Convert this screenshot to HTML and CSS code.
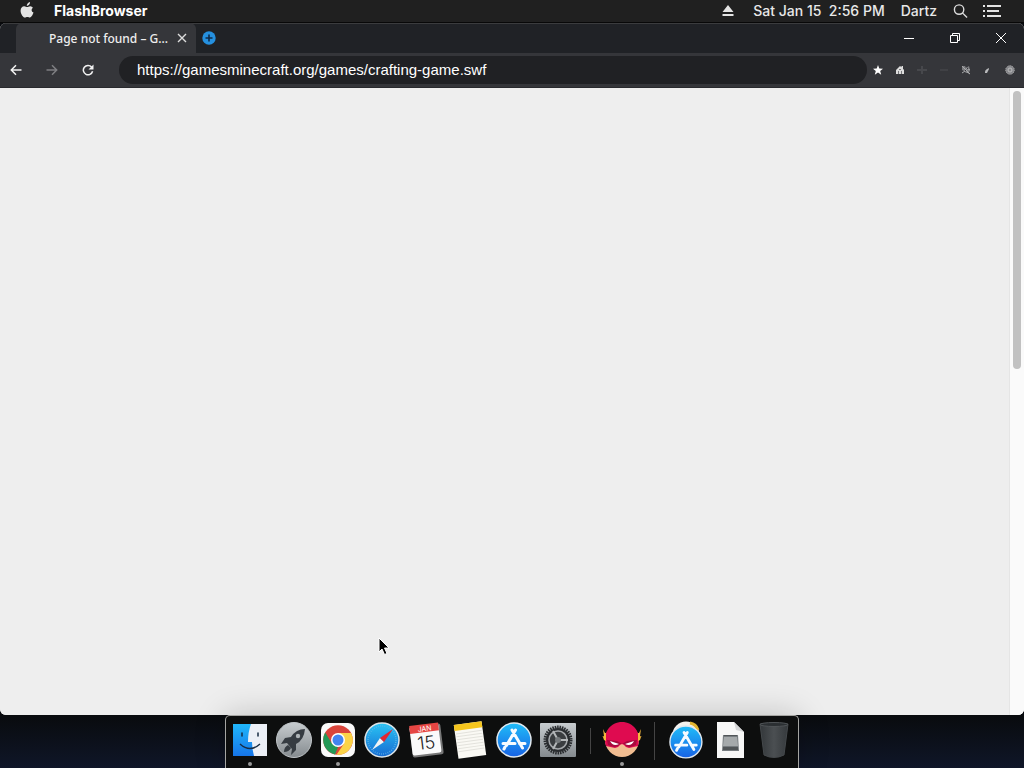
FILE: index.html
```html
<!DOCTYPE html>
<html lang="en">
<head>
<meta charset="utf-8">
<title>FlashBrowser</title>
<link rel="stylesheet" href="styles.css">
</head>
<body>
<header class="menubar">
  <button class="plain apple" aria-label="Apple menu"><svg width="14" height="17" viewBox="0 0 14 17"><path fill="#e4e4e4" d="M10 0C10.200 2 8.600 3.900 6.800 4 6.600 2.200 8.200.400 10 0ZM12.800 5.700C11 6.900 11.200 9.600 13.500 10.600 12.900 12.500 11.400 15.500 9.900 15.500 8.900 15.500 8.600 14.900 7.400 14.900S5.800 15.500 4.900 15.500C3.200 15.500.600 12 .600 8.700.600 5.900 2.300 4.300 4.200 4.300 5.500 4.300 6.400 5.100 7.200 5.100S9 4.200 10.400 4.300C11.400 4.400 12.200 4.800 12.800 5.700Z"/></svg></button>
  <button class="plain app-name">FlashBrowser</button>
  <div class="status">
    <button class="plain eject" aria-label="Eject"><svg width="12" height="12" viewBox="0 0 12 12"><path fill="#e4e4e4" d="M6 0 11.500 7H.500ZM.500 9h11v2H.500Z"/></svg></button>
    <time class="clock">Sat Jan 15&nbsp; 2:56 PM</time>
    <button class="plain user">Dartz</button>
    <button class="plain search" aria-label="Search"><svg width="15" height="16" viewBox="0 0 16 16" fill="none" stroke="#ddd" stroke-width="1.500"><circle cx="6.500" cy="6.500" r="5"/><path d="m10 10 5 5"/></svg></button>
    <button class="plain" aria-label="Notification center"><svg width="18" height="12" viewBox="0 0 18 12" fill="none" stroke="#e4e4e4" stroke-width="2"><path d="M0 1h2M4 1h14M0 6h2M4 6h12M0 11h2M4 11h14"/></svg></button>
  </div>
</header>

<main class="window">
  <div class="tabs">
    <div class="tab"><span class="tab-title">Page not found – G...</span><button class="plain" aria-label="Close tab"><svg width="10" height="10" viewBox="0 0 10 10" stroke="#ddd" stroke-width="1.400"><path d="m1 1 8 8M9 1 1 9"/></svg></button></div>
    <button class="plain new-tab" aria-label="New tab"><svg width="14" height="14" viewBox="0 0 14 14"><circle cx="7" cy="7" r="6.700" fill="#2590df"/><path d="M7 3.500v7M3.500 7h7" stroke="#102b49" stroke-width="1.600"/></svg></button>
    <div class="window-controls">
      <button class="plain" aria-label="Minimize"><svg width="10" height="10" viewBox="0 0 10 10"><path fill="#fff" d="M0 5h10v1H0z"/></svg></button>
      <button class="plain" aria-label="Restore"><svg width="10" height="10" viewBox="0 0 10 10" fill="none" stroke="#fff"><path d="M.500 2.500h7v7h-7zM2.500 2.500v-2h7v7h-2"/></svg></button>
      <button class="plain" aria-label="Close"><svg width="10" height="10" viewBox="0 0 10 10" stroke="#fff"><path d="m0 0 10 10M10 0 0 10"/></svg></button>
    </div>
  </div>
  <div class="toolbar">
    <div class="nav">
      <button class="plain" aria-label="Back"><svg width="12" height="12" viewBox="0 0 12 12" fill="none" stroke="#f2f2f2" stroke-width="1.500"><path d="M11.500 6H1.500M6 1.300 1.300 6 6 10.700"/></svg></button>
      <button class="plain" aria-label="Forward"><svg width="12" height="12" viewBox="0 0 12 12" fill="none" stroke="#7d7e81" stroke-width="1.500"><path d="M.500 6h10M6 1.300 10.700 6 6 10.700"/></svg></button>
      <button class="plain" aria-label="Reload"><svg width="12" height="12" viewBox="0 0 12 12"><path d="M9.600 3A4.700 4.700 0 1 0 10.600 7.300" fill="none" stroke="#f2f2f2" stroke-width="1.500"/><path fill="#f2f2f2" d="M11.500.500v5h-5z"/></svg></button>
    </div>
    <input class="address" type="text" aria-label="Address" value="https://gamesminecraft.org/games/crafting-game.swf">
    <div class="tools">
      <button class="plain" aria-label="Bookmark"><svg width="10" height="10" viewBox="0 0 10 10"><path fill="#fff" d="m5 0 1.300 3.400L10 3.700 7.200 6 8.200 9.700 5 7.600 1.800 9.700 2.800 6 0 3.700l3.700-.3z"/></svg></button>
      <button class="plain" aria-label="Home"><svg width="10" height="10" viewBox="0 0 10 10"><path fill="#ddd" d="M1 5 5 1l1.500 1.200V1H8v2.800L9 5v4H1z"/><path fill="#77787b" d="M3 6h1v3H3zM6 6h1v3H6zM4 4h2v1H4z"/></svg></button>
      <button class="plain" aria-label="Zoom in"><svg width="10" height="10" viewBox="0 0 10 10" stroke="#47484c" stroke-width="2"><path d="M0 5h10M5 1v8"/></svg></button>
      <button class="plain" aria-label="Zoom out"><svg width="10" height="10" viewBox="0 0 10 10" stroke="#4c4d51"><path d="M1 5h8"/></svg></button>
      <button class="plain" aria-label="Mute"><svg width="10" height="10" viewBox="0 0 10 10"><path fill="#7c7d80" d="M1 1h3l1 2 3-2 1 4-1 3H5L3 6 1 5z"/><path d="m1 1 8 8M1 8l3-2M5 3l4 2M6 7l3 2" stroke="#a8a9ab" fill="none"/><path fill="#34353a" d="M6 3h1v1H6zM4 5h1v1H4z"/></svg></button>
      <button class="plain" aria-label="Tools"><svg width="10" height="10" viewBox="0 0 10 10"><path fill="#b9babc" d="M2 7q0-2 2-3l2-1q0 2-1 3L4 8H2z"/></svg></button>
      <button class="plain" aria-label="Settings"><svg width="10" height="10" viewBox="0 0 10 10" fill="none"><circle cx="5" cy="5" r="4.300" fill="#85868a" stroke="#aaa" stroke-dasharray="1.200 .8"/><circle cx="5" cy="5" r="2" stroke="#bbb"/></svg></button>
    </div>
  </div>
  <div class="page"><div class="scrollbar"><div class="thumb"></div></div></div>
</main>

<footer class="desktop">
  <nav class="dock" aria-label="Dock">
    <button class="plain app running" aria-label="Finder"><svg width="36" height="36" viewBox="0 0 36 36"><defs><linearGradient id="finder" x2="0" y2="1"><stop stop-color="#20b7fb"/><stop offset="1" stop-color="#1675e8"/></linearGradient></defs><path fill="#eceff6" d="M1 2h34v32H1z"/><path fill="url(#finder)" d="M1 2h18q-3 8-3 18h4q0 7 2 14H1z"/><path d="M10 11v3M26 11v3" stroke="#172b42" stroke-width="1.500" stroke-linecap="round"/><path d="M8 22q10 9 20 0" fill="none" stroke="#172b42" stroke-width="1.400"/></svg></button>
    <button class="plain app" aria-label="Launchpad"><svg width="36" height="36" viewBox="0 0 36 36"><defs><linearGradient id="metal" x2="0" y2="1"><stop stop-color="#c7cccf"/><stop offset="1" stop-color="#858b8f"/></linearGradient></defs><circle cx="18" cy="18" r="17.500" fill="url(#metal)" stroke="#bfc4c7"/><path fill="#363c42" d="M29 7q-9 0-14 8l-6 1-4 6 6-1 5 6-1 6 5-5v-6q8-4 9-15zM12 23l3 3q-2 4-7 4 0-5 4-7z"/><circle cx="22" cy="14" r="2.200" fill="#aeb4b7"/></svg></button>
    <button class="plain app running" aria-label="Chrome"><svg width="36" height="36" viewBox="0 0 36 36"><rect x="1" y="1" width="34" height="34" rx="7" fill="#fafafa"/><circle cx="18" cy="18" r="14.800" fill="#d9443b"/><path fill="#249957" d="M5.200 10.600 11.900 21.500 18 25l-3 7.500A14.800 14.800 0 0 1 5.200 10.600z"/><path fill="#fbd348" d="M18 11h13A14.800 14.800 0 0 1 16.500 32.700L24.100 21.500z"/><circle cx="18" cy="18" r="7" fill="#fff"/><circle cx="18" cy="18" r="5.500" fill="#4384f1"/></svg></button>
    <button class="plain app" aria-label="Safari"><svg width="36" height="36" viewBox="0 0 36 36"><defs><linearGradient id="safari" x2="0" y2="1"><stop stop-color="#29c4f4"/><stop offset="1" stop-color="#176bd2"/></linearGradient></defs><circle cx="18" cy="18" r="17" fill="url(#safari)" stroke="#dce4e8" stroke-width="1.500"/><circle cx="18" cy="18" r="14" fill="none" stroke="#62b8e8" stroke-width="1.500" stroke-dasharray=".7 1.500"/><path fill="#f2f3f4" d="m8 28 8-12 4 4z"/><path fill="#e32731" d="m29 7-9 13-4-4z"/></svg></button>
    <button class="plain app" aria-label="Calendar"><svg width="36" height="36" viewBox="0 0 36 36"><g transform="rotate(-7 18 18)"><rect x="3" y="3" width="31" height="31" rx="2" fill="#777"/><rect x="3" y="3" width="29" height="29" rx="2" fill="#fafafa"/><path fill="#e54643" d="M3 2h29v8H3z"/><text class="calendar-month" x="18" y="9" text-anchor="middle">JAN</text><text class="calendar-day" x="18" y="27" text-anchor="middle">15</text></g></svg></button>
    <button class="plain app" aria-label="Notes"><svg width="36" height="38" viewBox="0 0 36 38"><g transform="rotate(-8 18 19)"><path fill="#faf9f4" d="M4 2h28v34H4z"/><path fill="#f5c51d" d="M4 2h28v6H4z"/><path stroke="#e3e2dc" d="M5 11h26M5 14h26M5 17h26M5 20h26M5 23h26M5 26h26M5 29h26"/></g></svg></button>
    <button class="plain app" aria-label="App Store"><svg width="36" height="36" viewBox="0 0 36 36"><defs><linearGradient id="store" x2="0" y2="1"><stop stop-color="#20bdf8"/><stop offset="1" stop-color="#1762e5"/></linearGradient></defs><g id="store-icon"><circle cx="18" cy="18" r="17" fill="url(#store)" stroke="#e1e8ee" stroke-width="1.500"/><path d="m19.500 8-9 15.500M16 8l10.500 18M7 21.500h12M23.500 21.500H29M9 25l-1 2" fill="none" stroke="#f7fbff" stroke-width="3" stroke-linecap="round"/></g></svg></button>
    <button class="plain app" aria-label="System Preferences"><svg width="36" height="36" viewBox="0 0 36 36"><rect y="1" width="36" height="34" rx="1" fill="url(#metal)"/><circle cx="18" cy="18" r="13" fill="#8f9396" stroke="#292c2f" stroke-width="3" stroke-dasharray="1.500 .9"/><circle cx="18" cy="18" r="11" fill="#3a3d40" stroke="#292c2f" stroke-width="2"/><circle cx="18" cy="18" r="9" fill="none" stroke="#a4a7aa" stroke-width="1.500"/><path d="M18 18h10M18 18l-5-9M18 18l-5 9" stroke="#b4b7b9" stroke-width="2"/><circle cx="18" cy="18" r="3" fill="#75797c"/></svg></button>
    <span class="divider"></span>
    <button class="plain app running" aria-label="FlashBrowser"><svg width="40" height="38" viewBox="0 0 40 38"><circle cx="20" cy="19" r="17" fill="#f1bd91"/><path fill="#df0b50" d="M4 25C0 11 9 1 20 1s20 10 16 24l-9 2q-3 0-5-3l-2-1-2 1q-2 3-5 3z"/><path fill="#a70b3d" d="m5 19 10 1 5 3 5-3 10-1-1 5-6 2q-4 0-6-3h-4q-2 3-6 3l-6-2z"/><path fill="#fff" d="m8 20 9 3q-6 3-9-3zM32 20l-9 3q6 3 9-3z"/><path fill="#f5b83c" d="m1 8 2 4h1v8l-2-1-1-3H0l2-1zM39 8l-2 4h-1v8l2-1 1-3h1l-2-1z"/></svg></button>
    <span class="divider tall"></span>
    <button class="plain app" aria-label="Applications"><svg width="36" height="38" viewBox="0 0 36 38"><circle cx="18" cy="14" r="13.500" fill="#f3f2ee"/><path d="M22 2q6 1 8 7" fill="none" stroke="#e2b631" stroke-width="3"/><use href="#store-icon" transform="translate(1 4) scale(.94)"/></svg></button>
    <button class="plain app" aria-label="Documents"><svg width="36" height="36" viewBox="0 0 36 36"><path fill="#f7f7f7" d="M5 0h17l10 10v26H5z"/><path fill="#d4d5d7" d="m22 0 2 8 8 2z"/><path fill="#777c80" d="M11 13h15l1 16H10z"/><path fill="#a5a9ab" d="M12 15h13l1 9H11z"/><path fill="#515558" d="M11 25h15v3H11zM12 13h13v1H12z"/></svg></button>
    <button class="plain app" aria-label="Trash"><svg width="36" height="38" viewBox="0 0 36 38"><defs><linearGradient id="trash"><stop stop-color="#33373a"/><stop offset=".5" stop-color="#4b4f52"/><stop offset="1" stop-color="#35393c"/></linearGradient></defs><path fill="url(#trash)" stroke="#45494c" d="m4 3 4 31q10 5 20 0l4-31z"/><ellipse cx="18" cy="3.500" rx="14" ry="2" fill="#2b2f32" stroke="#505457"/></svg></button>
  </nav>
</footer>
<svg class="cursor" width="12" height="19" viewBox="0 0 12 19" aria-hidden="true"><path fill="#000" stroke="#fff" d="M1 1v14l3-3 2.500 5.500 2.500-1L6.500 11H11z"/></svg>
</body>
</html>
```
FILE: styles.css
```css
* { box-sizing: border-box; }
body {
  margin: 0;
  height: 100vh;
  display: flex;
  flex-direction: column;
  overflow: hidden;
  background: #080a0e;
  color: #e8e8e8;
  font: 500 14px Inter, "Liberation Sans", sans-serif;
}
svg { display: block; flex: none; }
.plain { padding: 0; border: 0; background: none; color: inherit; font: inherit; }
.menubar {
  display: flex;
  align-items: center;
  flex: none;
  height: 23px;
  padding: 0 23px 1px 20px;
  background: #202020;
  border-bottom: 1px solid #080808;
}
.app-name { margin-left: 20px; font-weight: 700; color: #fff; }
.status { display: flex; align-items: center; margin-left: auto; }
.eject { margin-right: 19px; }
.clock { margin-right: 16px; }
.user { margin-right: 16px; }
.search { margin-right: 15px; }
.window {
  display: flex;
  flex-direction: column;
  flex: 1;
  min-height: 0;
  overflow: hidden;
  border-radius: 6px;
  background: #eee;
}
.tabs {
  display: flex;
  align-items: center;
  flex: none;
  height: 30px;
  padding: 0 18px 0 16px;
  background: #202226;
  box-shadow: inset 0 1px #3b3c3e;
}
.tab {
  display: flex;
  align-items: center;
  justify-content: space-between;
  align-self: stretch;
  width: 180px;
  padding: 0 9px 0 33px;
  border-radius: 6px 6px 0 0;
  background: #35363a;
}
.tab-title { font: 500 12px "Noto Sans", sans-serif; color: #eee; white-space: nowrap; }
.new-tab { margin-left: 6px; }
.window-controls { display: flex; gap: 36px; margin-left: auto; }
.toolbar {
  display: flex;
  align-items: center;
  flex: none;
  height: 35px;
  padding: 0 9px 0 10px;
  background: #35363a;
  border-bottom: 1px solid #292a2e;
}
.nav { display: flex; gap: 24px; margin-right: 25px; }
.address {
  flex: 1;
  min-width: 0;
  height: 28px;
  padding: 0 18px 1px;
  border: 0;
  border-radius: 14px;
  background: #202124;
  color: #fff;
  font: 15px "Liberation Sans", Arial, sans-serif;
}
.tools { display: flex; gap: 12px; margin-left: 6px; }
.page { display: flex; justify-content: flex-end; flex: 1; background: #eee; }
.scrollbar { width: 15px; padding: 3px 3px 0; background: #fafafa; border-left: 1px solid #e5e5e5; }
.thumb { width: 8px; height: 278px; border-radius: 4px; background: #c1c1c1; }
.desktop {
  display: flex;
  justify-content: center;
  flex: none;
  height: 53px;
  background: linear-gradient(#090b0e, #0f1628);
}
.dock {
  position: relative;
  display: flex;
  gap: 8px;
  padding: 0 6px;
  border: 1px solid #a5a5a2;
  border-bottom: 0;
  border-radius: 5px 5px 0 0;
  background: #0d0e0e;
  box-shadow: 0 0 32px #0003;
}
.app {
  display: flex;
  flex-direction: column;
  align-items: center;
  justify-content: center;
  width: 36px;
  height: 48px;
}
.calendar-month { fill: #fff; font: 7px Inter, sans-serif; }
.calendar-day { fill: #222; font: 300 18px Inter, sans-serif; }
.running { position: relative; }
.running::after {
  content: "";
  position: absolute;
  top: 46px;
  width: 4px;
  height: 4px;
  border-radius: 50%;
  background: #999;
}
.divider { width: 12px; padding-top: 12px; }
.divider::before { content: ""; display: block; width: 1px; height: 26px; margin: auto; background: #444; }
.tall { padding-top: 6px; }
.tall::before { height: 38px; }
.cursor { position: absolute; left: 378px; top: 637px; }
```
